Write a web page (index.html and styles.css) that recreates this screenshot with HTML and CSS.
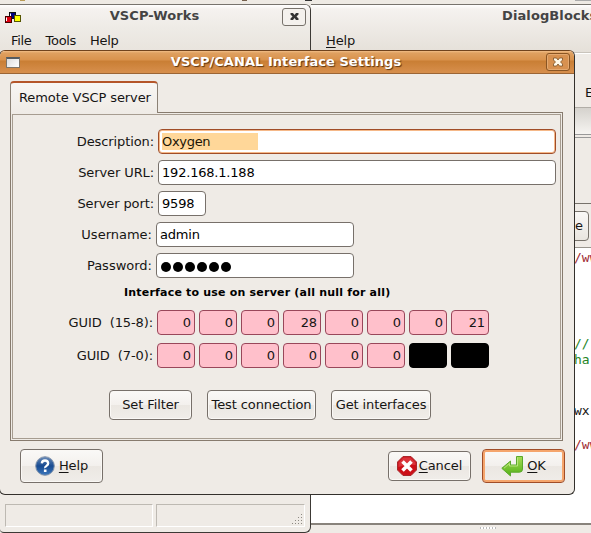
FILE: index.html
```html
<!DOCTYPE html>
<html lang="en">
<head>
<meta charset="utf-8">
<title>VSCP/CANAL Interface Settings</title>
<link rel="stylesheet" href="styles.css">
</head>
<body>
<main class="desktop">
  <span class="speck speck-a"></span><span class="speck speck-b"></span><span class="speck speck-c"></span><span class="speck speck-d"></span>

  <section class="window blocks">
    <header class="blocks-head">
      <div class="blocks-title">DialogBlocks</div>
      <nav class="blocks-menu"><u>H</u>elp</nav>
    </header>
    <div class="blocks-tools">E</div>
    <div class="blocks-band"></div>
    <div class="blocks-space"></div>
    <div class="blocks-bar"><span class="edge-button">e</span></div>
    <div class="editor">
      <span class="code red">/ww</span>
      <span class="code green c2">//</span>
      <span class="code green c3">ha</span>
      <span class="code c4">wx</span>
      <span class="code red c5">/ww</span>
    </div>
    <footer class="blocks-foot"><i></i></footer>
  </section>

  <section class="window works">
    <header class="works-title">
      <svg class="works-icon" width="17" height="12" viewBox="0 0 17 12">
        <rect x="4.500" y=".5" width="6" height="6" fill="#000080" stroke="#111"/>
        <rect x=".5" y="4.500" width="6" height="6" fill="#e00010" stroke="#400"/>
        <path d="M1.500 9V5.500M5.500 4V1.500" stroke="#fff"/>
        <rect x="9.500" y="3.500" width="6" height="6" fill="#ff0" stroke="#555500"/>
      </svg>
      <span class="works-name">VSCP-Works</span>
      <span class="close"><svg width="9" height="9" viewBox="0 0 9 9"><path d="M.5 1H3L4.500 3 6 1H8.500V2.500L6.500 4.500 8.500 6.500V8H6L4.500 6 3 8H.5V6.500L2.500 4.500.5 2.500Z" fill="#333"/></svg></span>
    </header>
    <nav class="works-menu"><span>File</span><span>Tools</span><span>Help</span></nav>
    <div class="works-body"></div>
    <footer class="status">
      <span></span>
      <span class="grip-cell"><svg width="12" height="12" viewBox="0 0 12 12" fill="#8d8982"><path d="M9 0h1v1H9zM6 3h1v1H6zM9 3h1v1H9zM3 6h1v1H3zM6 6h1v1H6zM9 6h1v1H9zM0 9h1v1H0zM3 9h1v1H3zM6 9h1v1H6zM9 9h1v1H9z"/></svg></span>
    </footer>
  </section>

  <section class="window dialog">
    <header class="dialog-title">
      <span class="app-box"></span>
      <span class="dialog-name">VSCP/CANAL Interface Settings</span>
      <span class="close warm"><svg width="10" height="10" viewBox="0 0 10 10"><path d="M.5 1H3.500L5 3 6.500 1H9.500V3L7.500 5 9.500 7V9H6.500L5 7 3.500 9H.5V7L2.500 5 .5 3Z" fill="#fff8e8" stroke="#6a4218" stroke-width=".7"/></svg></span>
    </header>
    <div class="tabs"><span class="tab">Remote VSCP server</span></div>
    <div class="page">
      <div class="page-inner">
        <div class="row"><label>Description:</label><span class="field wide focus"><mark>Oxygen</mark></span></div>
        <div class="row"><label>Server URL:</label><span class="field wide">192.168.1.188</span></div>
        <div class="row"><label>Server port:</label><span class="field port">9598</span></div>
        <div class="row near"><label>Username:</label><span class="field mid">admin</span></div>
        <div class="row near"><label>Password:</label><span class="field mid dots"><i></i><i></i><i></i><i></i><i></i><i></i></span></div>
        <div class="caption">Interface to use on server (all null for all)</div>
        <div class="row guid"><label>GUID&nbsp; (15-8):</label><b>0</b><b>0</b><b>0</b><b>28</b><b>0</b><b>0</b><b>0</b><b>21</b></div>
        <div class="row guid low"><label>GUID&nbsp; (7-0):</label><b>0</b><b>0</b><b>0</b><b>0</b><b>0</b><b>0</b><b class="hidden"></b><b class="hidden"></b></div>
        <div class="actions"><span class="button filter">Set Filter</span><span class="button test">Test connection</span><span class="button get">Get interfaces</span></div>
      </div>
    </div>
    <footer class="dialog-foot">
      <span class="button big help">
        <svg width="20" height="20" viewBox="0 0 20 20"><defs><linearGradient id="h" x2="0" y2="1"><stop stop-color="#6b8cb8"/><stop offset=".5" stop-color="#174a91"/><stop offset="1" stop-color="#3d78bd"/></linearGradient></defs><circle cx="10" cy="10" r="9.300" fill="url(#h)" stroke="#8796ab"/><path d="M6.800 7.300Q7 4.500 10 4.500T13.200 7.300Q13.200 8.800 11.500 9.900T10.200 12" fill="none" stroke="#fff" stroke-width="2.300"/><rect x="8.900" y="13.500" width="2.600" height="2.500" fill="#fff"/></svg>
        <span><u>H</u>elp</span></span>
      <span class="button cancel">
        <svg width="20" height="20" viewBox="0 0 20 20"><path d="M6 .5H14L19.500 6V14L14 19.500H6L.5 14V6Z" fill="#cc1018" stroke="#a8282c"/><path d="M6.500 1.500H13.500L18.500 6.500V9Q10 8 1.500 11V6.500Z" fill="#e0454a" opacity=".7"/><path d="M5.500 5.500 14.500 14.500M14.500 5.500 5.500 14.500" stroke="#fff" stroke-width="3.600"/></svg>
        <span><u>C</u>ancel</span></span>
      <span class="button big ok">
        <svg width="23" height="21" viewBox="0 0 23 21"><defs><linearGradient id="g" x2="0" y2="1"><stop stop-color="#a5dc55"/><stop offset="1" stop-color="#54b018"/></linearGradient></defs><path d="M15.500.5H21.500V13Q21.500 16.200 18.500 16.200H9.500V20L.8 12.300 9.500 5V9H15.500Z" fill="url(#g)" stroke="#5aa82c"/><path d="M16.500 1.500V10H8.500V7.500L3 12.200" fill="none" stroke="#c5e98c" opacity=".8"/></svg>
        <span><u>O</u>K</span></span>
    </footer>
  </section>
</main>
</body>
</html>
```
FILE: styles.css
```css
* { box-sizing: border-box; }
body { margin: 0; }
.desktop {
  position: relative; width: 591px; height: 533px; overflow: hidden;
  background: #eeeae4; color: #161514;
  font: 13px/16px "DejaVu Sans", sans-serif; letter-spacing: -.1px;
}
u { text-decoration: underline; text-decoration-thickness: 1px; text-underline-offset: 2px; }
.speck { position: absolute; top: 0; height: 1px; width: 5px; background: #75604d; }
.speck-a { left: 20px; background: #b99b55; }
.speck-b { left: 242px; }
.speck-c { left: 305px; width: 7px; background: #333; }
.speck-d { left: 575px; width: 16px; background: #aaa; }
.window { position: absolute; display: flex; flex-direction: column; overflow: hidden; }

.works { left: 0; top: 4px; width: 311px; height: 529px; background: #efebe6; border: 1px solid #3c3935; border-top-color: #77736d; border-left: 0; border-radius: 0 6px 6px 4px; }
.works-title { height: 23px; display: flex; align-items: center; background: linear-gradient(#fff 0, #f5f2ef 4px, #eeebe6); padding: 0 4px 0 5px; }
.works-icon { margin-top: 2px; }
.works-name { flex: 1; text-align: center; font-weight: bold; color: #444; letter-spacing: .1px; padding: 0 0 1px 5px; }
.close { width: 24px; height: 18px; border: 1px solid #77726b; border-radius: 3px; display: flex; align-items: center; justify-content: center; background: #f4f1ed; }
.works-menu { height: 26px; display: flex; gap: 14px; padding: 5px 0 0 11px; letter-spacing: -.3px; background: linear-gradient(#eeebe6, #e8e3dc); }
.works-body { flex: 1; }
.status { height: 28px; display: flex; gap: 3px; padding: 0 5px 5px; }
.status > span { width: 148px; border: 1px solid #bdb9b2; border-right-color: #fff; border-bottom-color: #fff; }
.status > .grip-cell { flex: 1; display: flex; justify-content: flex-end; align-items: flex-end; }

.blocks { left: 311px; top: 4px; width: 280px; height: 529px; border-top: 1px solid #77736d; background: #efebe6; }
.blocks-head { height: 48px; background: linear-gradient(#fff 0, #f5f2ef 4px, #e5e0d9); border-bottom: 1px solid #c9c4bc; padding: 3px 0 0 15px; }
.blocks-title { width: 300px; padding-left: 176px; font-weight: bold; color: #444; white-space: nowrap; letter-spacing: .1px; }
.blocks-menu { margin-top: 9px; }
.blocks-tools { height: 55px; padding: 31px 0 0 274px; border-bottom: 1px solid #b1ada7; border-top: 1px solid #fff; }
.blocks-band { height: 30px; background: linear-gradient(#d5d2cd, #f6f4f1 26px, #999 26px, #999 27px, #efebe6 27px, #efebe6 29px, #999 29px); }
.blocks-space { height: 66px; border-bottom: 1px solid #77726b; }
.blocks-bar { height: 44px; padding: 7px 0 0 251px; border-bottom: 1px solid #99958e; }
.edge-button { display: block; width: 27px; height: 30px; border: 1px solid #77726b; border-radius: 4px; text-align: right; padding: 6px 5px 0; background: linear-gradient(#faf8f6, #e9e5df); }
.editor { height: 277px; background: #fff; border-bottom: 2px solid #88837c; padding: 2px 0 0 263px; overflow: hidden; }
.code { display: block; height: 16px; white-space: nowrap; font: 13px/16px "DejaVu Sans Mono", monospace; letter-spacing: 0; }
.red { color: #a02c34; }
.green { color: #268526; }
.c2 { margin-top: 70px; }
.c4 { margin-top: 35px; }
.c5 { margin-top: 18px; }
.blocks-foot { padding: 2px 0 0 169px; }
.blocks-foot i { display: block; width: 16px; height: 2px; background: repeating-linear-gradient(90deg, #bbb 0 1px, #fff 1px 3px); }

.dialog { left: -1px; top: 50px; width: 576px; height: 445px; background: #efebe6; border: 1px solid #33302c; border-top-color: #70431d; border-radius: 6px; }
.dialog-title { height: 23px; display: flex; align-items: center; padding: 0 4px 0 6px; border-bottom: 1px solid #9b6535; background: linear-gradient(#f2bd86 0, #dfa060 2px, #d9924c 9px, #c97e34 10px, #d68e4b 21px); }
.app-box { width: 14px; height: 11px; border: 1px solid #7d7468; border-top: 2px solid #555b60; background: linear-gradient(135deg, #dcdcdc, #fff); }
.dialog-name { flex: 1; text-align: center; font-weight: bold; color: #fff; text-shadow: 1px 1px 1px #5c3512; padding-left: 6px; letter-spacing: .05px; }
.close.warm { border-color: #8a5523; background: #d79150; box-shadow: inset 0 0 0 1px #e4a970; }
.tabs { height: 38px; padding: 7px 0 0 10px; }
.tab { position: relative; z-index: 1; display: block; width: 148px; height: 32px; border: 1px solid #8b8175; border-top: 2px solid #b5562a; border-bottom: 0; border-radius: 4px 4px 0 0; padding: 7px 0 0 8px; white-space: nowrap; background: linear-gradient(#f8f6f3, #efebe6); }
.page { margin-left: 10px; width: 553px; height: 329px; border: 1px solid #877b6e; padding: 1px; }
.page-inner { height: 325px; border: 1px solid #a69c90; padding-top: 14px; }
.row { display: flex; height: 25px; margin-bottom: 6px; align-items: center; }
.row label { width: 141px; margin-right: 4px; text-align: right; white-space: nowrap; }
.row.near label { width: 139px; letter-spacing: 0; }
.field { height: 25px; border: 1px solid #77706a; border-radius: 4px; background: #fff; padding: 4px 3px; line-height: 16px; letter-spacing: -.2px; color: #000; }
.wide { width: 398px; }
.port { width: 48px; }
.mid { width: 198px; }
.focus { border-color: #a04d28; box-shadow: inset 0 0 0 1px #f5b888; padding-top: 3px; }
mark { display: block; width: 96px; height: 17px; line-height: 18px; background: #ffd799; color: #201505; letter-spacing: -.3px; }
.dots { display: flex; gap: 2px; padding: 8px 4px; }
.dots i { width: 10px; height: 10px; border-radius: 50%; background: #000; }
.caption { height: 26px; margin-left: 111px; padding-top: 1px; font: bold 11px/16px "DejaVu Sans", sans-serif; letter-spacing: .2px; color: #000; white-space: nowrap; }
.guid { margin-bottom: 8px; }
.guid label { width: 140px; }
.guid b { width: 38px; height: 25px; margin-right: 4px; border: 1px solid #99475a; border-radius: 4px; background: #ffc0cb; font-weight: normal; text-align: right; padding: 4px 3px 0 0; line-height: 16px; }
.guid .hidden { background: #000; border-color: #000; }
.actions { display: flex; gap: 15px; margin: 22px 0 0 96px; }
.button { height: 30px; border: 1px solid #77706a; border-radius: 4px; display: flex; align-items: center; justify-content: center; white-space: nowrap; background: linear-gradient(#faf9f7, #f3f0ed 50%, #ebe7e2 51%, #f0ede9); box-shadow: inset 0 0 0 1px #faf8f5; }
.filter { width: 83px; }
.test { width: 109px; }
.get { width: 100px; }
.dialog-foot { display: flex; align-items: center; padding: 8px 9px 0 20px; }
.button.big { width: 83px; height: 34px; }
.cancel { width: 83px; margin-left: auto; margin-right: 11px; }
.help svg { margin-right: 4px; }
.cancel svg { margin-right: 2px; }
.ok svg { margin-right: 3px; }
.button.ok { border-color: #a04d28; box-shadow: inset 0 0 0 2px #f5a56c; }
```
